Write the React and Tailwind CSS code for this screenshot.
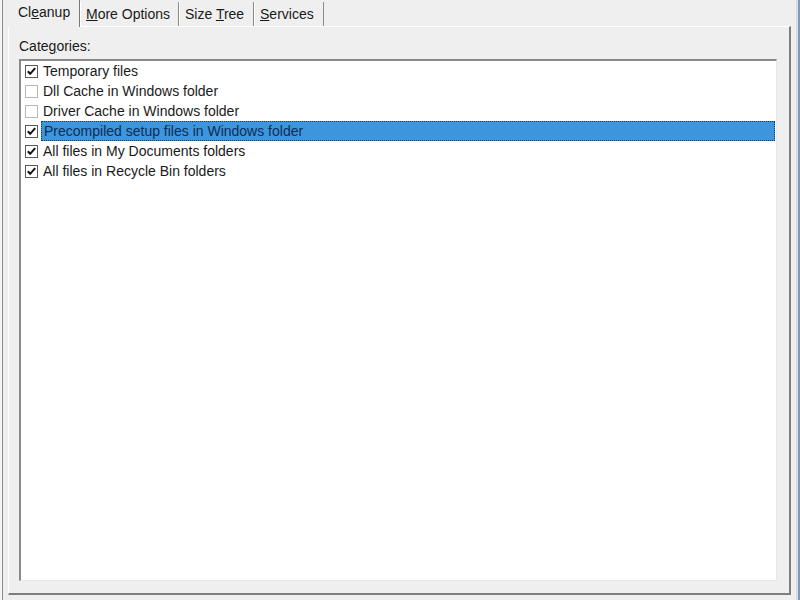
import React from "react";

const rows = [
  { label: "Temporary files", checked: true },
  { label: "Dll Cache in Windows folder", checked: false },
  { label: "Driver Cache in Windows folder", checked: false },
  { label: "Precompiled setup files in Windows folder", checked: true, selected: true },
  { label: "All files in My Documents folders", checked: true },
  { label: "All files in Recycle Bin folders", checked: true },
];

function Check({ checked }) {
  return (
    <div className={"w-[13px] h-[13px] border bg-white flex items-center justify-center shrink-0 " + (checked ? "border-[#5a5a5a]" : "border-[#b8b8b8]")}>
      {checked && (
        <svg width="11" height="11" viewBox="0 0 11 11">
          <path d="M1.8 5.2 L4.2 7.8 L9.2 2.2" fill="none" stroke="#111" strokeWidth="2" />
        </svg>
      )}
    </div>
  );
}

export default function App() {
  return (
    <div className="w-[800px] h-[600px] bg-[#efefef] flex text-[14px] text-[#1a1a1a]" style={{ fontFamily: '"Liberation Sans", Arial, sans-serif' }}>
      <div className="w-[2px] bg-[#f6f6f6]" />
      <div className="w-[1px] bg-[#8c8c8c]" />
      <div className="flex-1 flex flex-col pl-[5px] pr-[5px] pb-[5px]">
        <div className="h-[26px] flex items-end">
          <div className="w-[72px] h-[27px] -mb-[1px] relative z-10 bg-[#efefef] border-r border-[#7a7a7a] flex items-start pt-[2px] pl-[10px]">
            <span>Cl<span className="underline">e</span>anup</span>
          </div>
          <div className="w-[99px] h-[24px] border-r border-[#8a8a8a] border-l border-l-white flex items-start pt-[2px] pl-[5px]">
            <span><span className="underline">M</span>ore Options</span>
          </div>
          <div className="w-[75px] h-[24px] border-r border-[#8a8a8a] border-l border-l-white flex items-start pt-[2px] pl-[5px]">
            <span>Size <span className="underline">T</span>ree</span>
          </div>
          <div className="w-[70px] h-[24px] border-r border-[#8a8a8a] border-l border-l-white flex items-start pt-[2px] pl-[5px]">
            <span><span className="underline">S</span>ervices</span>
          </div>
        </div>
        <div className="flex-1 flex flex-col border-t border-l border-white border-r-2 border-b-2 border-r-[#7d7d7d] border-b-[#7d7d7d] pl-[10px] pr-[12px] pb-[12px]">
          <div className="h-[32px] flex items-end pb-[2px]">
            <span>Cate<span className="underline">g</span>ories:</span>
          </div>
          <div className="flex-1 bg-white border-t-2 border-l-2 border-t-[#8a8a8a] border-l-[#8a8a8a] border-r border-b border-r-[#e6e6e6] border-b-[#e6e6e6] flex flex-col pr-[1px]">
            {rows.map((r) => (
              <div key={r.label} className="h-[20px] flex items-center">
                <div className="w-[20px] flex justify-end pr-[3px]">
                  <Check checked={r.checked} />
                </div>
                <div className={"h-[20px] flex items-center pl-[2px] " + (r.selected ? "flex-1 bg-[#3d96db] border border-dotted border-[#123a66] text-[#0d2c5a]" : "")}>
                  {r.label}
                </div>
              </div>
            ))}
          </div>
        </div>
      </div>
      <div className="w-[2px] bg-[#d8dde3]" />
      <div className="w-[2px] bg-[#7d9bbd]" />
    </div>
  );
}
